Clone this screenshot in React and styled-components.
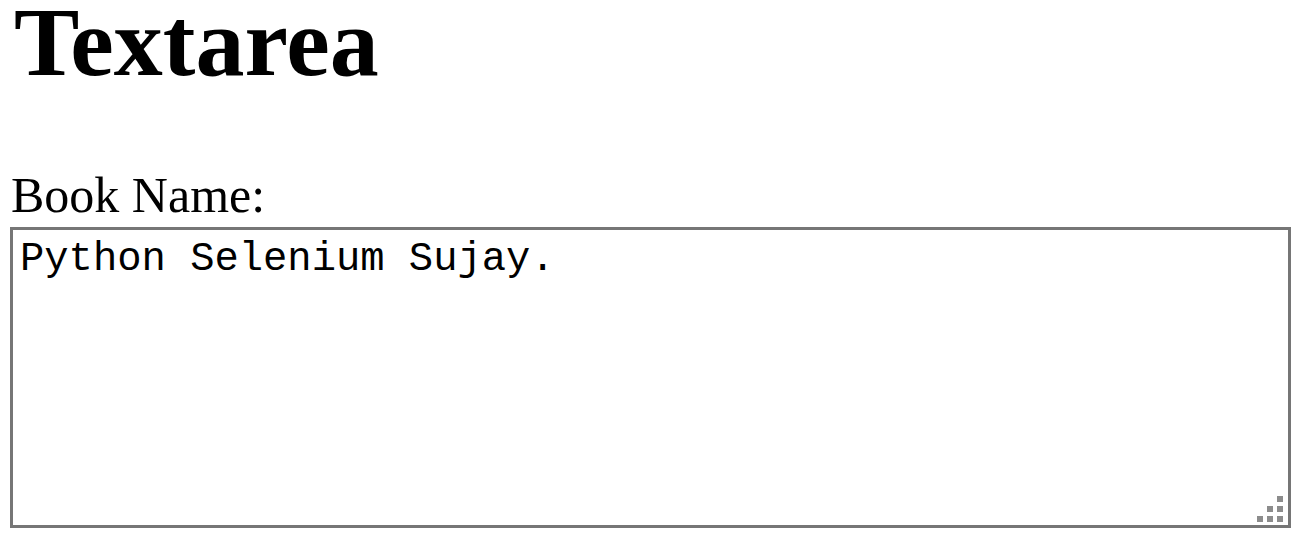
import React from "react";
import styled, { createGlobalStyle } from "styled-components";

const GlobalStyle = createGlobalStyle`
  html, body {
    margin: 0;
    background: #fff;
    color: #000;
    font-family: "Liberation Serif", "Times New Roman", serif;
  }
`;

const Page = styled.main`
  padding: 0 8px 0 10px;
  overflow: hidden;
`;

const Title = styled.h1`
  font-size: 98px;
  font-weight: 700;
  line-height: 84px;
  margin: 0 0 84px 4px;
`;

const Label = styled.label`
  display: block;
  font-size: 50px;
  line-height: 55px;
  margin-left: 1px;
`;

const Field = styled.div`
  position: relative;
  margin-top: 4px;
  width: 1281px;
  height: 301px;
`;

const Area = styled.textarea`
  display: block;
  box-sizing: border-box;
  width: 100%;
  height: 100%;
  margin: 0;
  padding: 6px 7px;
  border: 3px solid #767676;
  border-radius: 0;
  font-family: "Liberation Mono", "Courier New", monospace;
  font-size: 40.5px;
  line-height: normal;
  color: #000;
  background: #fff;
  resize: none;
  outline: none;
`;

// resize handle drawn over the textarea corner
const Grip = styled.div`
  position: absolute;
  right: 8px;
  bottom: 6px;
  display: grid;
  grid-template-columns: repeat(3, 6px);
  grid-template-rows: repeat(3, 6px);
  gap: 4px;
  pointer-events: none;
`;

const Dot = styled.span`
  background: ${({ $on }) => ($on ? "#8c8c8c" : "transparent")};
`;

const gripPattern = [0, 0, 1, 0, 1, 1, 1, 1, 1];

export default function App() {
  return (
    <>
      <GlobalStyle />
      <Page>
        <Title>Textarea</Title>
        <Label htmlFor="book">Book Name:</Label>
        <Field>
          <Area id="book" defaultValue="Python Selenium Sujay." spellCheck={false} />
          <Grip>
            {gripPattern.map((on, i) => (
              <Dot key={i} $on={on} />
            ))}
          </Grip>
        </Field>
      </Page>
    </>
  );
}
